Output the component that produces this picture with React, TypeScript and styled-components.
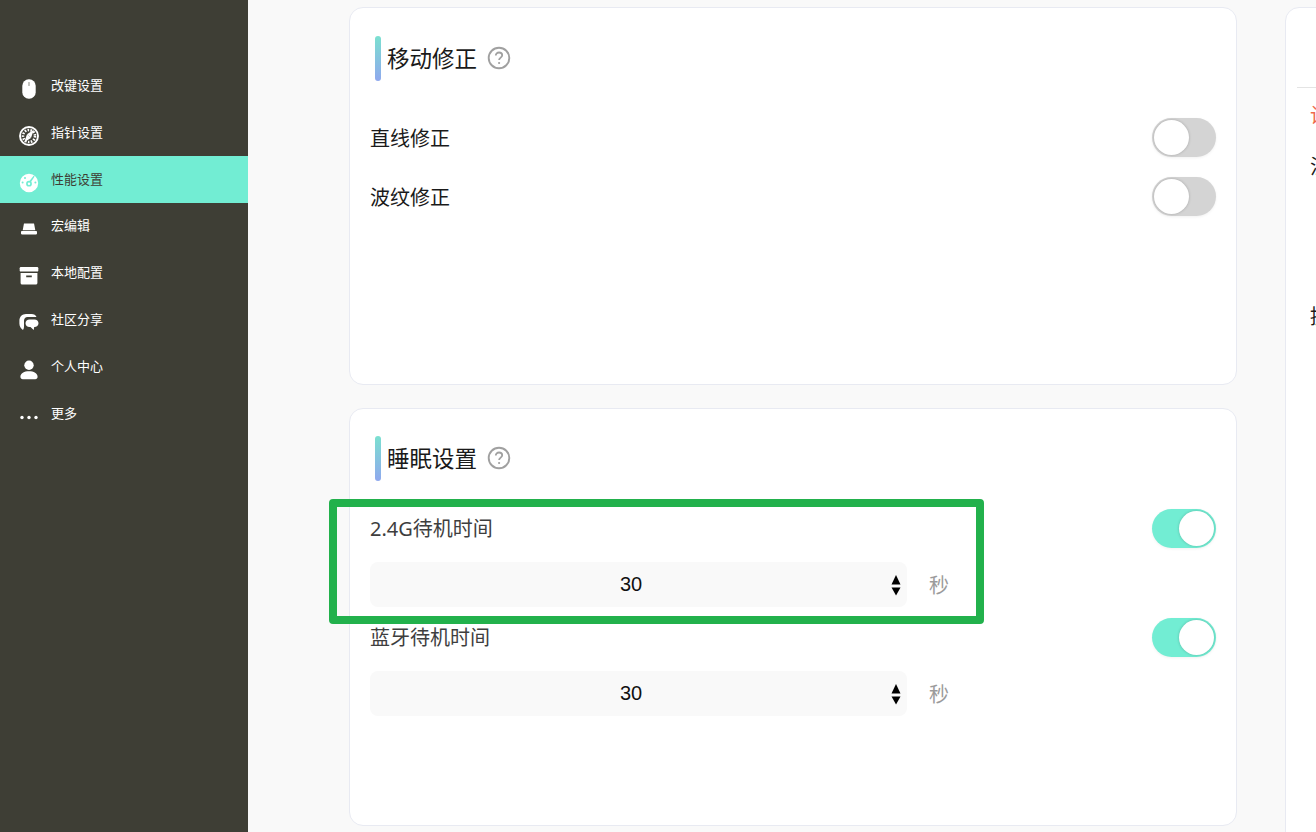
import { createGlobalStyle, styled } from "styled-components";

const GlobalStyle = createGlobalStyle`
  html, body {
    margin: 0;
    height: 100%;
    overflow: hidden;
    background: #f9f9f9;
    font-family: "Noto Sans", "Noto Sans CJK SC", sans-serif;
  }
  * {
    box-sizing: border-box;
  }
`;

const Page = styled.div`
  display: flex;
  width: 1316px;
  height: 832px;
  overflow: hidden;
  position: relative;
`;

const Sidebar = styled.nav`
  flex: 0 0 248px;
  background: #3e3e35;
  padding-top: 62.4px;
`;

const NavItem = styled.div<{ $active?: boolean }>`
  display: flex;
  align-items: center;
  height: 46.86px;
  padding: 0 0 3px 19px;
  gap: 12px;
  font-size: 13px;
  color: ${(p) => (p.$active ? "#3e3e35" : "#fff")};
  background: ${(p) => (p.$active ? "#72edd3" : "transparent")};
  svg {
    flex: 0 0 20px;
    margin-top: 9px;
  }
`;

const Content = styled.main`
  flex: 1;
  display: flex;
  align-items: flex-start;
  gap: 48px;
  padding: 7px 0 0 101px;
  min-width: 0;
`;

const LeftColumn = styled.div`
  flex: 0 0 888px;
  display: flex;
  flex-direction: column;
  gap: 23px;
`;

const Card = styled.section<{ $height: number; $top: number }>`
  height: ${(p) => p.$height}px;
  background: #fff;
  border: 1px solid #e8eaf2;
  border-radius: 14px;
  padding: ${(p) => p.$top}px 20px 0;
`;

const CardTitle = styled.div`
  display: flex;
  align-items: center;
  height: 45px;
  margin-left: 5px;
  margin-bottom: 27px;
`;

const TitleBar = styled.span`
  width: 6px;
  height: 45px;
  border-radius: 3px;
  margin-right: 6px;
  background: linear-gradient(180deg, #7be0d0, #8fa8ee);
`;

const TitleText = styled.h2`
  margin: 0 10px 0 0;
  padding-bottom: 2px;
  font-size: 22.5px;
  font-weight: 400;
  color: #1a1a1a;
`;

const HelpIcon = styled.svg`
  margin-bottom: 2px;
`;

const SwitchRow = styled.div`
  display: flex;
  align-items: center;
  justify-content: space-between;
  height: 59px;
  font-size: 20px;
  color: #1a1a1a;
`;

const SwitchTrack = styled.div<{ $on?: boolean }>`
  width: 64px;
  height: 39px;
  border-radius: 20px;
  padding: 2px;
  display: flex;
  justify-content: ${(p) => (p.$on ? "flex-end" : "flex-start")};
  background: ${(p) => (p.$on ? "#72edd3" : "#d4d4d4")};
  box-shadow: 0 1px 3px rgba(0, 0, 0, 0.06);
`;

const SwitchKnob = styled.div`
  width: 35px;
  height: 35px;
  border-radius: 50%;
  background: #fff;
  box-shadow: 0 0 3px rgba(0, 0, 0, 0.22);
`;

const TimeList = styled.div`
  padding-top: 1px;
`;

const TimeSetting = styled.div`
  display: flex;
  justify-content: space-between;
  align-items: flex-start;
  height: 109px;
`;

const TimeBody = styled.div`
  display: flex;
  flex-direction: column;
  gap: 20px;
`;

const TimeLabel = styled.div`
  font-size: 20px;
  line-height: 27px;
  color: #3e3e3e;
  margin-top: 6px;
`;

const TimeInputRow = styled.div`
  display: flex;
  align-items: center;
`;

const NumberBox = styled.div`
  position: relative;
  width: 537px;
  height: 45px;
  border-radius: 8px;
  background: #f9f9f9;
  font-family: "Liberation Sans", sans-serif;
  font-size: 20px;
  color: #111;
  display: flex;
  align-items: center;
  justify-content: center;
  padding-right: 15px;
`;

const Spinner = styled.svg`
  position: absolute;
  right: 5px;
  top: 13px;
`;

const Unit = styled.span`
  margin-left: 22px;
  font-size: 20px;
  color: #9b9b9b;
`;

const RightCard = styled.aside`
  flex: 0 0 400px;
  height: 840px;
  background: #fff;
  border: 1px solid #e8eaf2;
  border-radius: 14px;
  padding: 79px 0 0 11px;
  font-size: 20px;
  color: #1a1a1a;
`;

const RightDivider = styled.div`
  height: 1px;
  background: #e4e4e4;
  margin-bottom: 14px;
`;

const Notice = styled.div`
  margin-left: 13px;
  color: #ee6a4d;
  line-height: 27px;
  margin-bottom: 24px;
`;

const RightLine = styled.div<{ $gap: number }>`
  margin-left: 13px;
  line-height: 27px;
  margin-bottom: ${(p) => p.$gap}px;
`;

const Highlight = styled.div`
  position: absolute;
  left: 329px;
  top: 499px;
  width: 655px;
  height: 125px;
  border: 8px solid #22b14c;
  border-radius: 4px;
  pointer-events: none;
`;

const Help = () => (
  <HelpIcon width="24" height="24" viewBox="0 0 24 24" fill="none">
    <circle cx="12" cy="12" r="10.300" stroke="#a0a0a0" strokeWidth="1.900" />
    <path
      d="M8.800 9.600c0-1.900 1.400-3.100 3.200-3.100s3.200 1.100 3.200 2.800c0 2.300-3.100 2.400-3.100 4.800"
      stroke="#a0a0a0"
      strokeWidth="1.800"
    />
    <circle cx="12.100" cy="17" r="1.100" fill="#a0a0a0" />
  </HelpIcon>
);

const Stepper = () => (
  <Spinner width="12" height="22" viewBox="0 0 12 22">
    <path d="M6 0 10.500 9.500h-9z" fill="#000" />
    <path d="M6 20.500 1.500 12.500h9z" fill="#000" />
  </Spinner>
);

const MouseIcon = () => (
  <svg width="20" height="20" viewBox="0 0 20 20">
    <rect x="3.300" y="0.300" width="13.400" height="19.400" rx="6.500" fill="#fff" />
    <rect x="9.400" y="3" width="1.200" height="4" rx="0.600" fill="#9a9a92" />
  </svg>
);

const CompassIcon = () => (
  <svg width="20" height="20" viewBox="0 0 20 20" fill="none">
    <circle cx="10" cy="10" r="9" stroke="#fff" strokeWidth="1.900" />
    <circle cx="10" cy="10" r="6" stroke="#fff" strokeWidth="2.600" strokeDasharray="1.600 1.300" />
    <path d="M14.800 3.800 12 12 8 8.200z" fill="#fff" />
    <path d="M5.200 16.200 8 8.200 12 12z" fill="#fff" />
  </svg>
);

const GaugeIcon = () => (
  <svg width="20" height="20" viewBox="0 0 20 20">
    <path
      fillRule="evenodd"
      d="M10 .8a9.200 9.200 0 1 0 0 18.400A9.200 9.200 0 0 0 10 .8zm0 7a2.900 2.900 0 1 1 0 5.800 2.900 2.900 0 0 1 0-5.800z"
      fill="#fff"
    />
    <path d="M9.300 9.400 14.600 2.800 15.600 3.500 11 10.600z" fill="#72edd3" />
    <circle cx="10" cy="10.700" r="1.200" fill="#fff" />
    <circle cx="3.600" cy="9.600" r="1" fill="#72edd3" />
    <circle cx="6" cy="5" r="1" fill="#72edd3" />
    <circle cx="16.400" cy="9.600" r="1" fill="#72edd3" />
  </svg>
);

const MacroIcon = () => (
  <svg width="20" height="20" viewBox="0 0 20 20">
    <path d="M5 4.500h10l1.300 6.800H3.700z" fill="#fff" />
    <rect x="2" y="12" width="16" height="3.400" rx="0.800" fill="#fff" />
  </svg>
);

const ArchiveIcon = () => (
  <svg width="20" height="20" viewBox="0 0 20 20">
    <rect x="0.700" y="1" width="18.600" height="4.600" rx="1.200" fill="#fff" />
    <path
      fillRule="evenodd"
      d="M1.600 7h16.800v10a1.600 1.600 0 0 1-1.600 1.600H3.200a1.600 1.600 0 0 1-1.600-1.600zm5.600 2.600v1.600h5.600V9.600z"
      fill="#fff"
    />
  </svg>
);

const ChatIcon = () => (
  <svg width="20" height="20" viewBox="0 0 20 20">
    <path
      d="M7 1h5.500C15 1 16.800 2.300 17.500 4H8.500C6.500 4 5 5.600 5 7.500v3.500c0 2 .4 4-1 6C1.800 15.500.4 13.500.4 10.500V7.500C.4 3.800 3.300 1 7 1z"
      fill="#fff"
    />
    <path
      d="M10.500 6.500h5c2.200 0 4 1.500 4 3.700s-1.800 3.800-4 3.800h-.3l-.5 3-3.200-3h-1c-2.200 0-4-1.600-4-3.800s1.800-3.700 4-3.700z"
      fill="#fff"
    />
  </svg>
);

const PersonIcon = () => (
  <svg width="20" height="20" viewBox="0 0 20 20">
    <circle cx="10" cy="5.200" r="4.700" fill="#fff" />
    <path
      d="M1.400 16.800c0-3.600 3.800-5.600 8.600-5.600s8.600 2 8.600 5.600c0 1.500-.9 2.400-2.400 2.400H3.800c-1.500 0-2.400-.9-2.400-2.400z"
      fill="#fff"
    />
  </svg>
);

const MoreIcon = () => (
  <svg width="20" height="20" viewBox="0 0 20 20">
    <circle cx="3" cy="10.500" r="1.700" fill="#fff" />
    <circle cx="10" cy="10.500" r="1.700" fill="#fff" />
    <circle cx="17" cy="10.500" r="1.700" fill="#fff" />
  </svg>
);

const navItems = [
  { label: "改键设置", icon: <MouseIcon /> },
  { label: "指针设置", icon: <CompassIcon /> },
  { label: "性能设置", icon: <GaugeIcon />, active: true },
  { label: "宏编辑", icon: <MacroIcon /> },
  { label: "本地配置", icon: <ArchiveIcon /> },
  { label: "社区分享", icon: <ChatIcon /> },
  { label: "个人中心", icon: <PersonIcon /> },
  { label: "更多", icon: <MoreIcon /> },
];

const Switch = ({ on }: { on?: boolean }) => (
  <SwitchTrack $on={on}>
    <SwitchKnob />
  </SwitchTrack>
);

const TimeRow = ({ label }: { label: string }) => (
  <TimeSetting>
    <TimeBody>
      <TimeLabel>{label}</TimeLabel>
      <TimeInputRow>
        <NumberBox>
          30
          <Stepper />
        </NumberBox>
        <Unit>秒</Unit>
      </TimeInputRow>
    </TimeBody>
    <Switch on />
  </TimeSetting>
);

const App = () => (
  <Page>
    <GlobalStyle />
    <Sidebar>
      {navItems.map((item) => (
        <NavItem key={item.label} $active={item.active}>
          {item.icon}
          <span>{item.label}</span>
        </NavItem>
      ))}
    </Sidebar>
    <Content>
      <LeftColumn>
        <Card $height={378} $top={28}>
          <CardTitle>
            <TitleBar />
            <TitleText>移动修正</TitleText>
            <Help />
          </CardTitle>
          <SwitchRow>
            直线修正
            <Switch />
          </SwitchRow>
          <SwitchRow>
            波纹修正
            <Switch />
          </SwitchRow>
        </Card>
        <Card $height={418} $top={27}>
          <CardTitle>
            <TitleBar />
            <TitleText>睡眠设置</TitleText>
            <Help />
          </CardTitle>
          <TimeList>
            <TimeRow label="2.4G待机时间" />
            <TimeRow label="蓝牙待机时间" />
          </TimeList>
        </Card>
      </LeftColumn>
      <RightCard>
        <RightDivider />
        <Notice>设备</Notice>
        <RightLine $gap={123}>注意</RightLine>
        <RightLine $gap={0}>提示</RightLine>
      </RightCard>
    </Content>
    <Highlight />
  </Page>
);

export default App;
